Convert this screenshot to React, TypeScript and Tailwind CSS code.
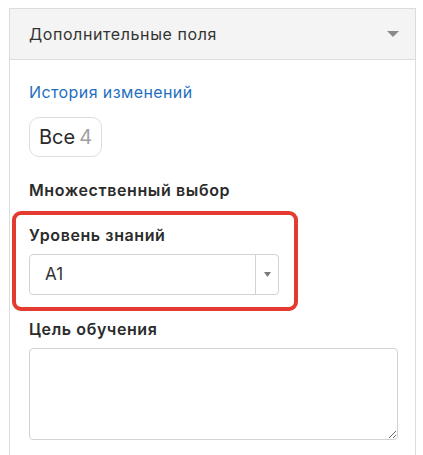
import React from 'react';

const fontStack = { fontFamily: 'Inter, "Noto Sans", sans-serif' };

const App: React.FC = () => {
  return (
    <div className="min-h-screen bg-white pt-[8px] pl-[9px] pr-[7px]" style={fontStack}>
      <div className="border border-b-0 border-[#dcdcdc] min-h-[447px]">
        <div className="h-[51px] bg-[#f4f4f4] border-b border-[#dcdcdc] flex items-center justify-between pl-[19px] pr-[16px]">
          <span className="text-[16px] tracking-[0.6px] text-[#333]">Дополнительные поля</span>
          <svg width="12" height="6" viewBox="0 0 12 6">
            <path d="M0 0 L12 0 L6 6 Z" fill="#8a8a8a" />
          </svg>
        </div>

        <div className="px-[19px] pt-[20px]">
          <a className="block text-[16px] leading-[24px] tracking-[0.4px] text-[#1f6fbf]">История изменений</a>

          <button className="mt-[13px] h-[40px] px-[9px] rounded-[10px] border border-[#dedede] bg-white text-[20px] text-[#2a2a2a] flex items-center">
            Все <span className="ml-[4px] text-[#a0a0a0]">4</span>
          </button>

          <div className="mt-[21px] text-[16px] leading-[24px] tracking-[0.6px] font-semibold text-[#2b2b2b]">Множественный выбор</div>

          <div className="relative mt-[21px] w-[250px]">
            <span className="absolute -left-[17px] -top-[12px] w-[286px] h-[100px] border-4 border-[#e33b30] rounded-[9px] pointer-events-none" />
            <div className="text-[16px] leading-[24px] tracking-[0.6px] font-semibold text-[#2b2b2b]">Уровень знаний</div>
            <div className="mt-[7px] h-[41px] border border-[#d3d3d3] rounded-[4px] flex">
              <div className="flex-1 flex items-center pl-[15px] text-[17px] text-[#333]">A1</div>
              <div className="w-[23px] border-l border-[#d3d3d3] flex items-center justify-center">
                <svg width="7" height="5" viewBox="0 0 7 5">
                  <path d="M0 0 L7 0 L3.5 5 Z" fill="#7a7a7a" />
                </svg>
              </div>
            </div>
          </div>

          <div className="mt-[22px] text-[16px] leading-[24px] tracking-[0.6px] font-semibold text-[#2b2b2b]">Цель обучения</div>
          <textarea className="mt-[7px] block w-[369px] h-[92px] border border-[#d3d3d3] rounded-[4px] outline-none" />
        </div>
      </div>
    </div>
  );
};

export default App;
